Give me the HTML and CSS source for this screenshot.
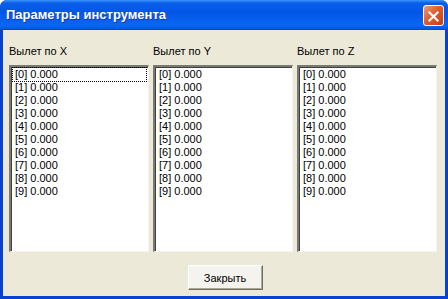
FILE: index.html
```html
<!DOCTYPE html>
<html lang="ru">
<head>
<meta charset="UTF-8" />
<title>Параметры инструмента</title>
<link rel="stylesheet" href="styles.css">
</head>
<body>

<div class="window">
  <div class="titlebar">
    <span class="title">Параметры инструмента</span>
    <span class="close">
      <svg width="21" height="21" viewBox="0 0 21 21">
        <path d="M6 6 L15 15 M15 6 L6 15" stroke="#fff" stroke-width="2.4" stroke-linecap="square"/>
      </svg>
    </span>
  </div>
  <div class="client">
    <div class="columns">
      <div class="col">
        <div class="label">Вылет по X</div>
        <ul class="list" id="list-x"></ul>
      </div>
      <div class="col">
        <div class="label">Вылет по Y</div>
        <ul class="list" id="list-y"></ul>
      </div>
      <div class="col">
        <div class="label">Вылет по Z</div>
        <ul class="list" id="list-z"></ul>
      </div>
    </div>
    <div class="footer">
      <button class="btn">Закрыть</button>
    </div>
  </div>
</div>

<script>
  ['list-x', 'list-y', 'list-z'].forEach((id, n) => {
    const ul = document.getElementById(id);
    for (let i = 0; i < 10; i++) {
      const li = document.createElement('li');
      li.textContent = '[' + i + '] 0.000';
      if (n === 0 && i === 0) li.className = 'focus';
      ul.appendChild(li);
    }
  });
</script>

</body>
</html>
```

FILE: styles.css
```css
body {
  margin: 0;
  background: #fff;
  font-family: "Liberation Sans", Arial, sans-serif;
}
.window {
  width: 448px;
  height: 299px;
  box-sizing: border-box;
  background: #0842d0;
  border-radius: 7px 7px 0 0;
  padding: 0 3px 3px 3px;
  display: flex;
  flex-direction: column;
}
.titlebar {
  height: 30px;
  margin: 0 -3px;
  padding: 0 4px 0 6px;
  border-radius: 7px 7px 0 0;
  background: linear-gradient(#3d95ff, #0a5ee8 10%, #0256e6 40%, #0b66f4 85%, #0756e8 95%, #0442c9);
  display: flex;
  align-items: center;
  justify-content: space-between;
}
.title {
  color: #fff;
  font-weight: bold;
  font-size: 13px;
  text-shadow: 1px 1px 0 #1a3aa0;
  padding-bottom: 1px;
}
.close {
  width: 21px;
  height: 21px;
  box-sizing: border-box;
  border: 1px solid #fff;
  border-radius: 3px;
  background: linear-gradient(135deg, #f09a7a, #e35b2d 45%, #c83d12);
  display: flex;
  margin-top: 1px;
}
.client {
  flex: 1;
  background: #ece9d8;
  display: flex;
  flex-direction: column;
  padding: 0 6px 0 6px;
}
.columns {
  display: flex;
  gap: 4px;
  padding-top: 15px;
}
.col {
  width: 140px;
}
.label {
  font-size: 11px;
  color: #000;
  height: 13px;
  line-height: 13px;
  margin-bottom: 7px;
}
.list {
  list-style: none;
  margin: 0;
  height: 187px;
  box-sizing: border-box;
  background: #fff;
  border-top: 2px solid #7a7a74;
  border-left: 2px solid #7a7a74;
  border-right: 1px solid #f4f3ee;
  border-bottom: 1px solid #f4f3ee;
  box-shadow: inset 1px 1px 0 #404040;
  padding: 1px 2px 0 2px;
}
.list li {
  font-size: 11px;
  line-height: 13px;
  height: 13px;
  padding-left: 2px;
  color: #000;
}
.list li.focus {
  outline: 1px dotted #000;
}
.footer {
  display: flex;
  justify-content: center;
  padding-top: 13px;
  padding-left: 2px;
}
.btn {
  width: 75px;
  height: 25px;
  font-family: "Liberation Sans", Arial, sans-serif;
  font-size: 11px;
  color: #000;
  background: #f4f3ee;
  border: 1px solid #fff;
  border-right-color: #716f64;
  border-bottom-color: #716f64;
  box-shadow: inset -1px -1px 0 #aca899;
  padding: 0;
}
```
